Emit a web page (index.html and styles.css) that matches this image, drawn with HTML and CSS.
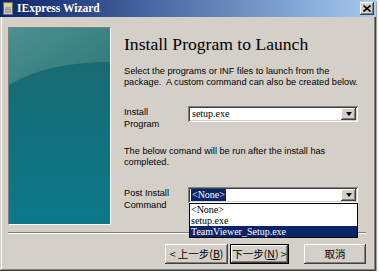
FILE: index.html
```html
<!DOCTYPE html>
<html>
<head>
<meta charset="utf-8">
<link rel="stylesheet" href="styles.css">
</head>
<body>
<div class="window">
  <div class="titlebar">
    <svg class="app-icon" width="10" height="13" viewBox="0 0 10 13">
      <rect x="0.5" y="0.5" width="9" height="12" fill="#c9c7c0" stroke="#6b6b6b"/>
      <rect x="1" y="1" width="8" height="3" fill="#e8d58a"/>
      <path d="M2 6h6M2 8h6M2 10h6" stroke="#8a8a8a" stroke-width="1"/>
    </svg>
    <span class="title">IExpress Wizard</span>
    <div class="close">
      <svg width="8" height="7" viewBox="0 0 8 7"><path d="M0.5 0.5L7.5 6.5M7.5 0.5L0.5 6.5" stroke="#000" stroke-width="1.6"/></svg>
    </div>
  </div>
  <div class="main">
    <div class="side">
      <svg width="101" height="196" viewBox="0 0 101 196">
        <defs>
          <linearGradient id="lo" x1="0" y1="0" x2="0" y2="1">
            <stop offset="0" stop-color="#1d666c"/>
            <stop offset="0.35" stop-color="#156e78"/>
            <stop offset="1" stop-color="#0a7889"/>
          </linearGradient>
          <linearGradient id="hi" x1="0" y1="0" x2="1" y2="1">
            <stop offset="0" stop-color="#4c908f"/>
            <stop offset="1" stop-color="#2c7879"/>
          </linearGradient>
        </defs>
        <rect width="101" height="196" fill="url(#lo)"/>
        <path d="M0 0H101V34Q38 34 0 57Z" fill="url(#hi)"/>
      </svg>
    </div>
    <div class="content">
      <h1>Install Program to Launch</h1>
      <p class="desc">Select the programs or INF files to launch from the<br>package.&nbsp; A custom command can also be created below.</p>
      <div class="row">
        <div class="label">Install<br>Program</div>
        <div class="combo">
          <span class="value">setup.exe</span>
          <span class="arrow"><i></i></span>
        </div>
      </div>
      <p class="desc note">The below comand will be run after the install has<br>completed.</p>
      <div class="row row-post">
        <div class="label">Post Install<br>Command</div>
        <div class="combo">
          <span class="value"><span class="selected">&lt;None&gt;</span></span>
          <span class="arrow"><i></i></span>
          <ul class="list">
            <li>&lt;None&gt;</li>
            <li>setup.exe</li>
            <li class="hl">TeamViewer_Setup.exe</li>
          </ul>
        </div>
      </div>
    </div>
  </div>
  <div class="sep"></div>
  <div class="buttons">
    <div class="btn btn-back">&lt; 上一步(<u>B</u>)</div>
    <div class="btn btn-next">下一步(<u>N</u>) &gt;</div>
    <div class="btn btn-cancel">取消</div>
  </div>
</div>
</body>
</html>
```

FILE: styles.css
```css
html, body {
  margin: 0;
  padding: 0;
  background: #ffffff;
}

.window {
  box-sizing: border-box;
  width: 376px;
  height: 271px;
  padding: 0 2px 2px 2px;
  background: #d4d0c8;
  box-shadow: inset -1px -1px #404040, inset 1px 1px #d4d0c8,
              inset -2px -2px #808080, inset 2px 2px #ffffff,
              1px 1px 1px rgba(0,0,0,0.35);
  display: flex;
  flex-direction: column;
}

.titlebar {
  height: 17px;
  margin: 0 -2px;
  padding: 0 2px 0 3px;
  background: linear-gradient(to right, #0a246a, #a6caf0);
  display: flex;
  align-items: center;
}

.app-icon {
  display: block;
  flex: none;
}

.title {
  margin-left: 4px;
  color: #ffffff;
  font: bold 11.5px/17px "Liberation Serif", serif;
}

.close {
  margin-left: auto;
  width: 14px;
  height: 13px;
  background: #d4d0c8;
  box-shadow: inset -1px -1px #404040, inset 1px 1px #ffffff, inset -2px -2px #808080;
  display: flex;
  align-items: center;
  justify-content: center;
}

.close svg {
  display: block;
}

.main {
  display: flex;
  align-items: flex-start;
  padding-top: 10px;
}

.side {
  margin-left: 6px;
  border-top: 1px solid #808080;
  border-left: 1px solid #808080;
  border-right: 1px solid #ffffff;
  border-bottom: 1px solid #ffffff;
  width: 101px;
  height: 196px;
  flex: none;
}

.side svg {
  display: block;
}

.content {
  margin-left: 13px;
  padding-top: 7px;
  color: #000;
}

h1 {
  margin: 0;
  font: normal 17.6px/20px "Liberation Serif", serif;
  white-space: nowrap;
}

.desc {
  margin: 12px 0 0 0;
  font: 9.2px/11px "Liberation Sans", Arial, sans-serif;
  white-space: nowrap;
}

.desc.note {
  margin-top: 16px;
}

.row {
  display: flex;
  align-items: flex-start;
  margin-top: 18px;
}

.row-post {
  margin-top: 19px;
}

.label {
  width: 64px;
  flex: none;
  font: 9.2px/12px "Liberation Sans", Arial, sans-serif;
}

.combo {
  position: relative;
  box-sizing: border-box;
  width: 170px;
  height: 16px;
  background: #ffffff;
  box-shadow: inset 1px 1px #808080, inset -1px -1px #ffffff,
              inset 2px 2px #404040, inset -2px -2px #d4d0c8;
  display: flex;
  align-items: center;
  padding: 2px;
}

.value {
  flex: 1;
  padding-left: 2px;
  font: 10px/12px "Liberation Serif", serif;
  color: #000;
}

.selected {
  display: inline-block;
  margin-left: -1px;
  padding: 0 1px;
  background: #0a246a;
  color: #ffffff;
}

.arrow {
  width: 15px;
  height: 12px;
  flex: none;
  background: #d4d0c8;
  box-shadow: inset -1px -1px #404040, inset 1px 1px #ffffff, inset -2px -2px #808080;
  display: flex;
  align-items: center;
  justify-content: center;
}

.arrow i {
  width: 0;
  height: 0;
  border-left: 3.5px solid transparent;
  border-right: 3.5px solid transparent;
  border-top: 4px solid #000;
}

.list {
  position: absolute;
  top: 100%;
  left: 1px;
  right: 0;
  margin: 0;
  padding: 0;
  list-style: none;
  background: #ffffff;
  border: 1px solid #000;
  font: 10px/11px "Liberation Serif", serif;
  z-index: 2;
}

.list li {
  padding-left: 1px;
  height: 11px;
  white-space: nowrap;
}

.list li.hl {
  background: #0a246a;
  color: #ffffff;
}

.sep {
  margin: 7px 8px 0 6px;
  height: 0;
  border-top: 1px solid #808080;
  border-bottom: 1px solid #ffffff;
}

.buttons {
  display: flex;
  justify-content: flex-end;
  margin-top: 10px;
  padding-right: 8px;
}

.btn {
  box-sizing: border-box;
  height: 20px;
  background: #d4d0c8;
  box-shadow: inset -1px -1px #404040, inset 1px 1px #ffffff,
              inset -2px -2px #808080, inset 2px 2px #d4d0c8;
  font: 10.5px/20px "Noto Sans CJK TC", "Liberation Sans", sans-serif;
  color: #000;
  text-align: center;
  white-space: nowrap;
}

.btn u {
  text-decoration: underline;
}

.btn-back {
  width: 63px;
}

.btn-next {
  width: 59px;
  margin-left: 2px;
  outline: 1px solid #000;
  outline-offset: -1px;
  box-shadow: inset -2px -2px #404040, inset 2px 2px #ffffff,
              inset -3px -3px #808080;
}

.btn-cancel {
  width: 62px;
  margin-left: 15px;
}
```
